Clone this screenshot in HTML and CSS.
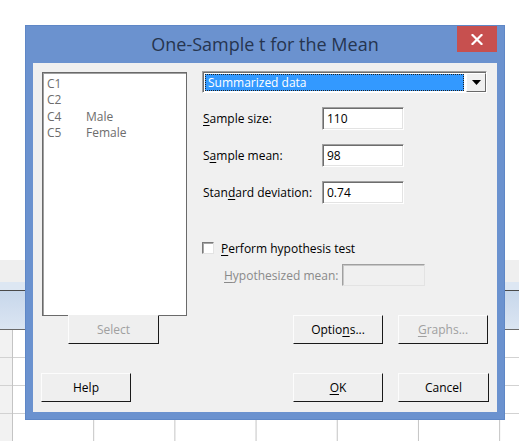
FILE: index.html
```html
<!DOCTYPE html>
<html>
<head>
<meta charset="utf-8">
<link rel="stylesheet" href="styles.css">
</head>
<body>
<div class="desk">
  <div class="bg-top"></div>
  <div class="bg-strip"></div>
  <div class="bg-band"><div class="band-top"></div><div class="band-main"></div></div>
  <div class="bg-grid"></div>

  <div class="window">
    <div class="titlebar">
      <span class="title">One-Sample t for the Mean</span>
      <div class="close"><svg width="12" height="11" viewBox="0 0 12 11"><path d="M1.5 1 L10.5 10 M10.5 1 L1.5 10" stroke="#fff" stroke-width="2.2" stroke-linecap="square"/></svg></div>
    </div>
    <div class="client">
      <div class="top">
        <div class="leftcol">
          <div class="listbox">
            <div class="li"><span class="c1">C1</span><span></span></div>
            <div class="li"><span class="c1">C2</span><span></span></div>
            <div class="li"><span class="c1">C4</span><span>Male</span></div>
            <div class="li"><span class="c1">C5</span><span>Female</span></div>
          </div>
          <div class="btn disabled select">Select</div>
        </div>
        <div class="rightcol">
          <div class="combo">
            <div class="combo-sel"><span>Summarized data</span></div>
            <div class="combo-arrow"><svg width="9" height="5" viewBox="0 0 9 5"><path d="M0 0 H9 L4.5 5 Z" fill="#000"/></svg></div>
          </div>
          <div class="field first"><span class="label"><u>S</u>ample size:</span><div class="input">110</div></div>
          <div class="field"><span class="label">S<u>a</u>mple mean:</span><div class="input">98</div></div>
          <div class="field"><span class="label">Stan<u>d</u>ard deviation:</span><div class="input">0.74</div></div>
          <div class="check-row"><span class="checkbox"></span><span class="label"><u>P</u>erform hypothesis test</span></div>
          <div class="hyp-row"><span class="label gray"><u>H</u>ypothesized mean:</span><div class="input off"></div></div>
          <div class="btn-row">
            <div class="btn">Optio<u>n</u>s...</div>
            <div class="btn disabled"><u>G</u>raphs...</div>
          </div>
        </div>
      </div>
      <div class="bottom">
        <div class="btn">Help</div>
        <div class="spacer"></div>
        <div class="btn"><u>O</u>K</div>
        <div class="btn wide">Cancel</div>
      </div>
    </div>
  </div>
</div>
</body>
</html>
```

FILE: styles.css
```css
html, body {
  margin: 0;
  padding: 0;
  background: #fff;
}
body {
  font-family: "Open Sans", "Noto Sans", sans-serif;
  font-size: 12px;
}
.desk {
  position: relative;
  width: 519px;
  height: 441px;
  overflow: hidden;
}
.bg-top {
  height: 260px;
  background: #fff;
}
.bg-strip {
  height: 22px;
  background: #efefef;
}
.band-top {
  height: 8px;
  background: #dde7f3;
  border-bottom: 1px solid #4a4a4a;
}
.band-main {
  height: 38px;
  background: linear-gradient(#c7d7eb, #dbe5f2);
  border-bottom: 1px solid #6a6a6a;
}
.bg-grid {
  height: 111px;
  background-color: #fff;
  background-image:
    linear-gradient(to right, #c4c4c4 1px, transparent 1px),
    linear-gradient(to bottom, #d2d2d2 1px, transparent 1px),
    linear-gradient(to right, #f2f2f2 12px, transparent 12px);
  background-size: 81.2px 100%, 100% 28px, 100% 100%;
  background-position: 12px 0, 0 27px, 0 0;
  background-repeat: repeat-x, repeat-y, no-repeat;
}

/* window */
.window {
  position: absolute;
  left: 25px;
  top: 25px;
  width: 464px;
  padding: 0 8px 8px;
  background: #6b92cf;
  box-shadow: inset 0 0 0 1px #5f87c6;
}
.titlebar {
  position: relative;
  height: 38px;
  display: flex;
  align-items: center;
  justify-content: center;
}
.title {
  font-size: 18px;
  color: #26354f;
}
.close {
  position: absolute;
  right: 0;
  top: 1px;
  width: 40px;
  height: 26px;
  background: #c7504f;
  display: flex;
  align-items: center;
  justify-content: center;
}
.client {
  height: 349px;
  box-sizing: border-box;
  background: #f0f0f0;
  padding: 8px 8px 10px;
  display: flex;
  flex-direction: column;
}
.top {
  display: flex;
}
.leftcol {
  margin-left: 1px;
  margin-top: 1px;
  display: flex;
  flex-direction: column;
}
.listbox {
  width: 145px;
  height: 244px;
  box-sizing: border-box;
  background: #fff;
  border: 1px solid #6a6a6a;
  box-shadow: inset 1px 1px 0 #a0a0a0;
  padding: 3px 2px 1px;
  color: #6d6d6d;
  line-height: 16.3px;
}
.li {
  display: flex;
  padding-left: 2px;
}
.c1 {
  width: 39px;
}
.btn {
  width: 90px;
  height: 29px;
  box-sizing: border-box;
  background: #efefef;
  border-style: solid;
  border-width: 1px;
  border-color: #fcfcfc #1a1a1a #1a1a1a #fcfcfc;
  display: flex;
  align-items: center;
  justify-content: center;
  color: #000;
}
.btn.wide {
  width: 91px;
}
.btn.disabled {
  color: #a0a0a0;
}
.select {
  width: 91px;
  margin-left: 26px;
  margin-top: -1px;
  border-top-color: transparent;
}
.rightcol {
  margin-left: 15px;
  width: 286px;
  display: flex;
  flex-direction: column;
}
.combo {
  height: 22px;
  width: 285px;
  box-sizing: border-box;
  display: flex;
  border-style: solid;
  border-width: 1px;
  border-color: #a0a0a0 #fff #fff #a0a0a0;
  box-shadow: inset 1px 1px 0 #6d6d6d;
  background: #fff;
  padding: 1px 0 0 1px;
}
.combo-sel {
  flex: 1;
  margin: 1px 2px 1px 1px;
  background: #3399ff;
  outline: 1px dotted #222;
  outline-offset: -1px;
  color: #fff;
  display: flex;
  align-items: center;
  padding-left: 3px;
  font-size: 12px;
}
.combo-arrow {
  width: 20px;
  box-sizing: border-box;
  background: #f0f0f0;
  border-style: solid;
  border-width: 1px;
  border-color: #fff #696969 #696969 #fff;
  display: flex;
  align-items: center;
  justify-content: center;
}
.field {
  display: flex;
  align-items: center;
  margin-top: 14px;
  padding-left: 1px;
}
.label {
  color: #000;
  white-space: nowrap;
}
.field .label {
  width: 119px;
}
.input {
  width: 82px;
  height: 23px;
  box-sizing: border-box;
  background: #fff;
  border-style: solid;
  border-width: 1px;
  border-color: #a0a0a0 #fff #fff #a0a0a0;
  box-shadow: inset 1px 1px 0 #6d6d6d, inset -1px -1px 0 #e3e3e3;
  padding: 2px 4px;
  line-height: 17px;
}
.input.off {
  width: 83px;
  height: 22px;
  background: #f0f0f0;
  border-color: #a0a0a0 #e3e3e3 #e3e3e3 #a0a0a0;
  box-shadow: inset 1px 1px 0 #c8c8c8;
}
.check-row {
  display: flex;
  align-items: center;
  height: 16px;
  margin-top: 36px;
}
.checkbox {
  width: 12px;
  height: 12px;
  box-sizing: border-box;
  background: #fff;
  border-style: solid;
  border-width: 1px;
  border-color: #7a7a7a #e3e3e3 #e3e3e3 #7a7a7a;
  box-shadow: inset 1px 1px 0 #a8a8a8;
  margin-right: 7px;
  margin-top: -1px;
}
.hyp-row {
  display: flex;
  align-items: center;
  margin-top: 8px;
  margin-left: 22px;
}
.hyp-row .label {
  width: 118px;
}
.label.gray {
  color: #8a8a8a;
}
.btn-row {
  display: flex;
  justify-content: flex-end;
  gap: 15px;
  margin-top: 29px;
}
.bottom {
  display: flex;
  gap: 15px;
  margin-top: 29px;
}
.spacer {
  flex: 1;
}
u {
  text-decoration-thickness: 1px;
  text-underline-offset: 2px;
}
```
